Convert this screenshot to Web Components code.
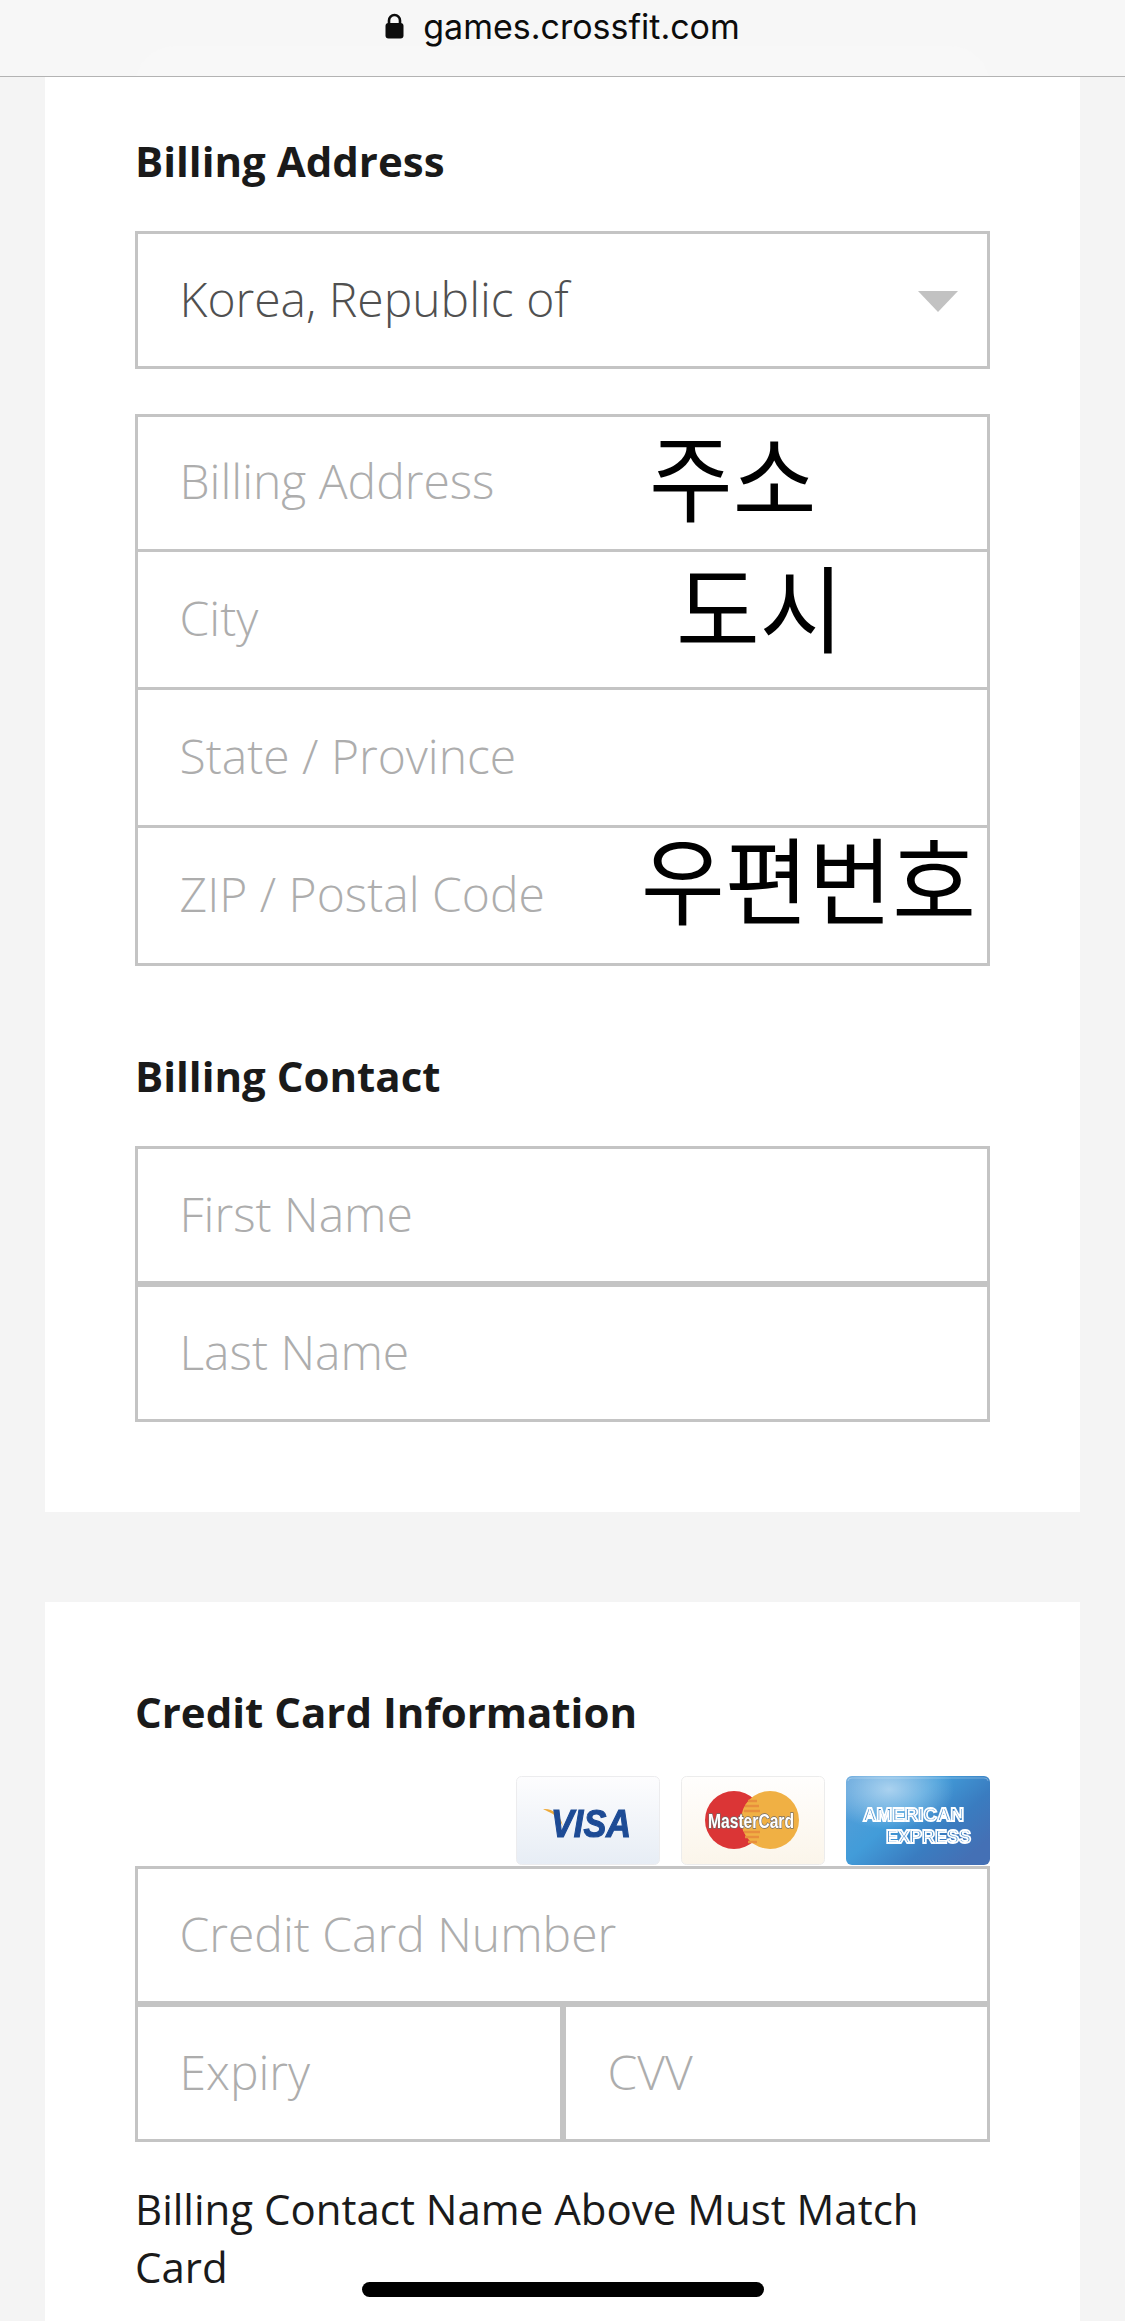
<!DOCTYPE html>
<html lang="en">
<head>
<meta charset="utf-8">
<title>Billing</title>
<style>
  html, body { margin: 0; height: 2321px; overflow: hidden; background: #f4f4f4; }
  body { font-family: "Open Sans", "Liberation Sans", sans-serif; color: #1a1a1a; }
  x-group { margin-bottom: 46px; }
</style>
</head>
<body>
<x-url-bar>games.crossfit.com</x-url-bar>

<x-section style="height:1435px">
  <x-heading style="margin-top:57px">Billing Address</x-heading>
  <x-group style="margin-bottom:45px">
    <x-select>Korea, Republic of</x-select>
  </x-group>
  <x-group>
    <x-field joined note="주소" note-left="649" note-top="-10.5">Billing Address</x-field>
    <x-field joined note="도시" note-left="676" note-top="-14.5">City</x-field>
    <x-field joined>State / Province</x-field>
    <x-field joined note="우편번호" note-left="641" note-top="-18.5">ZIP / Postal Code</x-field>
  </x-group>
  <x-heading style="margin-top:83px">Billing Contact</x-heading>
  <x-group>
    <x-field>First Name</x-field>
    <x-field>Last Name</x-field>
  </x-group>
</x-section>

<x-section style="margin-top:90px;height:800px">
  <x-heading style="margin-top:83px;margin-bottom:0">Credit Card Information</x-heading>
  <x-card-logos></x-card-logos>
  <x-group>
    <x-field>Credit Card Number</x-field>
    <x-split>
      <x-field>Expiry</x-field>
      <x-field>CVV</x-field>
    </x-split>
  </x-group>
  <x-note>Billing Contact Name Above Must Match Card</x-note>
</x-section>

<x-home-bar></x-home-bar>

<script>
class UrlBar extends HTMLElement {
  constructor() {
    super();
    this.attachShadow({ mode: 'open' });
    this.shadowRoot.innerHTML = `
      <style>
        :host {
          display: block;
          height: 76px;
          background: #f7f7f7;
          border-bottom: 1px solid #b3b3b3;
          overflow: hidden;
        }
        #row {
          display: flex;
          justify-content: center;
          align-items: center;
          gap: 19px;
          height: 53px;
          font: 400 34px/53px Inter, "Liberation Sans", sans-serif;
          color: #0c0c0c;
        }
        svg { width: 19px; height: 26px; display: block; margin-top: -1px; }
        #tab {
          height: 40px;
          margin: -7px 135px 0;
          background: #f8f8f8;
          border-radius: 40px 40px 0 0;
        }
      </style>
      <div id="row">
        <svg viewBox="0 0 19 26"><path d="M4 11V7.500a5.500 5.500 0 0 1 11 0V11" fill="none" stroke="#0c0c0c" stroke-width="2.600"/><rect x="0.500" y="10" width="18" height="15.500" rx="3" fill="#0c0c0c"/></svg>
        <span><slot></slot></span>
      </div>
      <div id="tab"></div>
    `;
  }
}

class Section extends HTMLElement {
  constructor() {
    super();
    this.attachShadow({ mode: 'open' });
    this.shadowRoot.innerHTML = `
      <style>
        :host {
          display: block;
          box-sizing: border-box;
          margin: 0 45px;
          padding: 0 90px;
          background: #fff;
          overflow: hidden;
        }
      </style>
      <slot></slot>
    `;
  }
}

class Heading extends HTMLElement {
  constructor() {
    super();
    this.attachShadow({ mode: 'open' });
    this.shadowRoot.innerHTML = `
      <style>
        :host {
          display: block;
          margin: 82px 0 43px;
          font: 700 42px/54px "Open Sans", sans-serif;
          color: #1a1a1a;
        }
      </style>
      <slot></slot>
    `;
  }
}

class Group extends HTMLElement {
  constructor() {
    super();
    this.attachShadow({ mode: 'open' });
    this.shadowRoot.innerHTML = `
      <style>
        :host {
          display: flex;
          flex-direction: column;
        }
      </style>
      <slot></slot>
    `;
  }
}

class Field extends HTMLElement {
  constructor() {
    super();
    this.attachShadow({ mode: 'open' });
    const note = this.getAttribute('note');
    const left = this.getAttribute('note-left') || 0;
    const top = this.getAttribute('note-top') || 0;
    this.shadowRoot.innerHTML = `
      <style>
        :host {
          display: flex;
          align-items: center;
          position: relative;
          box-sizing: border-box;
          height: 138px;
          padding: 0 41.5px 3px;
          background: #fff;
          border: 3px solid #c4c4c4;
          font: 300 48px/60px "Open Sans", sans-serif;
          color: #adadad;
          white-space: nowrap;
        }
        /* the address rows share one border line */
        :host([joined]) { padding-bottom: 4px; }
        :host([joined]:not(:first-child)) { height: 141px; margin-top: -3px; }
        #note {
          position: absolute;
          font: 400 91px/126px "Noto Sans CJK KR", sans-serif;
          color: #000;
          transform: scaleY(1.05);
          transform-origin: top;
        }
      </style>
      <slot></slot>
      ${note ? `<span id="note" style="left:${left - 138}px;top:${top}px">${note}</span>` : ''}
    `;
  }
}

class SelectField extends HTMLElement {
  constructor() {
    super();
    this.attachShadow({ mode: 'open' });
    this.shadowRoot.innerHTML = `
      <style>
        :host {
          display: flex;
          align-items: center;
          justify-content: space-between;
          box-sizing: border-box;
          height: 138px;
          padding: 0 29px 3px 41.5px;
          border: 3px solid #c4c4c4;
          font: 300 48px/60px "Open Sans", sans-serif;
          color: #505050;
        }
        i {
          display: block;
          width: 0;
          height: 0;
          margin-top: 6px;
          border: solid transparent;
          border-width: 21px 20px 0;
          border-top-color: #c2c2c2;
        }
      </style>
      <slot></slot>
      <i></i>
    `;
  }
}

class Split extends HTMLElement {
  constructor() {
    super();
    this.attachShadow({ mode: 'open' });
    this.shadowRoot.innerHTML = `
      <style>
        :host { display: grid; grid-template-columns: 428px 427px; }
      </style>
      <slot></slot>
    `;
  }
}

class CardLogos extends HTMLElement {
  constructor() {
    super();
    this.attachShadow({ mode: 'open' });
    this.shadowRoot.innerHTML = `
      <style>
        :host {
          display: flex;
          justify-content: flex-end;
          gap: 21px;
          margin-top: 37px;
          margin-bottom: 1px;
        }
        svg { display: block; width: 144px; height: 89px; filter: blur(0.7px); }
        text { font-family: "Liberation Sans", sans-serif; font-weight: 700; }
      </style>
      <svg viewBox="0 0 144 89">
        <defs><linearGradient id="v" x1="0" y1="0" x2="0" y2="1"><stop offset="0" stop-color="#fdfdfe"/><stop offset="1" stop-color="#e7edf5"/></linearGradient></defs>
        <rect x="0.500" y="0.500" width="143" height="88" rx="5" fill="url(#v)" stroke="#ececee"/>
        <path d="M27 33 Q42 32 47 50 Q40 38 33 36 Z" fill="#eeaa3a"/>
        <text x="35" y="61" font-size="39" font-style="italic" fill="#1d4b95" stroke="#1d4b95" stroke-width="1.200" textLength="80" lengthAdjust="spacingAndGlyphs">VISA</text>
      </svg>
      <svg viewBox="0 0 144 89">
        <defs><linearGradient id="m" x1="0" y1="0" x2="0" y2="1"><stop offset="0" stop-color="#fffefd"/><stop offset="1" stop-color="#fbf5ea"/></linearGradient></defs>
        <rect x="0.500" y="0.500" width="143" height="88" rx="5" fill="url(#m)" stroke="#ececec"/>
        <circle cx="53" cy="44" r="29" fill="#db3536"/>
        <circle cx="89" cy="44" r="29" fill="#f0b044"/>
        <path d="M67 25h9M64 30h14M63 35h16M63 56h16M64 61h14M67 66h9" stroke="#e88f3c" stroke-width="2.500" fill="none"/>
        <text x="27" y="52" font-size="20" fill="#fff" stroke="#6f6a68" stroke-width="1.400" paint-order="stroke" textLength="86" lengthAdjust="spacingAndGlyphs">MasterCard</text>
      </svg>
      <svg viewBox="0 0 144 89">
        <defs>
          <linearGradient id="a" x1="0" y1="0" x2="1" y2="0.700"><stop offset="0" stop-color="#5b9fd8"/><stop offset="0.450" stop-color="#429cd9"/><stop offset="0.750" stop-color="#3a7cc0"/><stop offset="1" stop-color="#4470b5"/></linearGradient>
          <radialGradient id="ah" cx="0.300" cy="0.150" r="0.450"><stop offset="0" stop-color="#b5d8f2" stop-opacity="0.900"/><stop offset="1" stop-color="#b5d8f2" stop-opacity="0"/></radialGradient>
        </defs>
        <rect width="144" height="89" rx="6" fill="url(#a)"/>
        <rect width="144" height="89" rx="6" fill="url(#ah)"/>
        <path d="M2 5 Q2 2 6 2 H138 Q142 2 142 5" fill="none" stroke="#fff" stroke-opacity="0.300"/>
        <text x="17" y="45" font-size="19" fill="#3c86c8" stroke="#fff" stroke-width="1.800" textLength="101" lengthAdjust="spacingAndGlyphs">AMERICAN</text>
        <text x="40" y="67" font-size="19" fill="#3c86c8" stroke="#fff" stroke-width="1.800" textLength="85" lengthAdjust="spacingAndGlyphs">EXPRESS</text>
      </svg>
    `;
  }
}

class Note extends HTMLElement {
  constructor() {
    super();
    this.attachShadow({ mode: 'open' });
    this.shadowRoot.innerHTML = `
      <style>
        :host {
          display: block;
          margin-top: -8px;
          font: 400 42px/58px "Open Sans", sans-serif;
          color: #1a1a1a;
        }
      </style>
      <slot></slot>
    `;
  }
}

class HomeBar extends HTMLElement {
  constructor() {
    super();
    this.attachShadow({ mode: 'open' });
    this.shadowRoot.innerHTML = `
      <style>
        :host {
          display: block;
          position: fixed;
          left: 362px;
          top: 2282px;
          width: 402px;
          height: 15px;
          border-radius: 8px;
          background: #000;
        }
      </style>
    `;
  }
}

customElements.define('x-url-bar', UrlBar);
customElements.define('x-section', Section);
customElements.define('x-heading', Heading);
customElements.define('x-group', Group);
customElements.define('x-field', Field);
customElements.define('x-select', SelectField);
customElements.define('x-split', Split);
customElements.define('x-card-logos', CardLogos);
customElements.define('x-note', Note);
customElements.define('x-home-bar', HomeBar);
</script>
</body>
</html>
